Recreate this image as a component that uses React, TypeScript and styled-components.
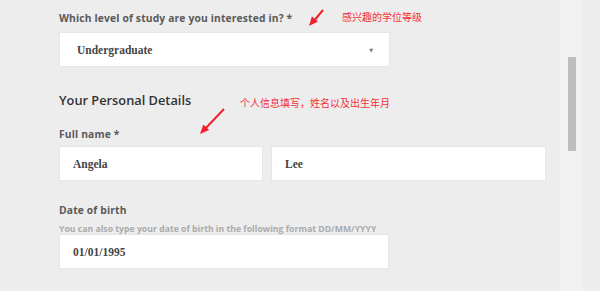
import React, { FC } from 'react';
import styled, { createGlobalStyle } from 'styled-components';

const GlobalStyle = createGlobalStyle`
  html, body {
    margin: 0;
    padding: 0;
    background-color: #EDEDED;
    height: 291px;
    overflow: hidden;
  }
`

const Page = styled.div`
  position: relative;
  display: flex;
  height: 291px;
  font-family: "Open Sans", "Liberation Sans", sans-serif;
`

const Main = styled.main`
  flex-grow: 1;
  display: flex;
  flex-direction: column;
  padding: 11px 0 0 59px;
`

const Label = styled.label<{ $gap?: number }>`
  display: block;
  margin-top: ${p => p.$gap ?? 0}px;
  font-size: 10.3px;
  line-height: 14px;
  font-weight: 700;
  color: #5A5A5A;
  letter-spacing: 0.15px;
`

const Hint = styled.div`
  margin-top: 7px;
  font-size: 8.7px;
  line-height: 10px;
  font-weight: 700;
  color: #ABABAB;
`

const Heading = styled.h2`
  margin: 24px 0 0;
  font-size: 12.8px;
  line-height: 18px;
  font-weight: 600;
  color: #333333;
`

const Row = styled.div`
  display: flex;
  gap: 8px;
  margin-top: 5px;
`

const Field = styled.div<{ $width: number; $gap?: number }>`
  box-sizing: border-box;
  display: flex;
  align-items: center;
  justify-content: space-between;
  width: ${p => p.$width}px;
  height: 35px;
  margin-top: ${p => p.$gap ?? 0}px;
  padding: 0 13px;
  background-color: #FFFFFF;
  border: 1px solid #E6E6E6;
  font-family: "Liberation Serif", "DejaVu Serif", serif;
  font-size: 11.5px;
  font-weight: 700;
  color: #444444;
`

const SelectField = styled(Field)`
  padding: 0 16px 0 17px;
`

const Caret = styled.span`
  font-family: "DejaVu Sans", sans-serif;
  font-size: 5px;
  color: #777777;
`

const ScrollTrack = styled.div`
  width: 23px;
  margin-right: 17px;
  background-color: #F1F1F1;
  display: flex;
  justify-content: center;
`

const ScrollThumb = styled.div`
  width: 8px;
  height: 94px;
  margin-top: 57px;
  background-color: #BDBDBD;
`

const Note = styled.div<{ $x: number; $y: number }>`
  position: absolute;
  left: ${p => p.$x}px;
  top: ${p => p.$y}px;
  font-family: "Noto Sans CJK SC", sans-serif;
  font-size: 10px;
  line-height: 12px;
  color: #F0303A;
  white-space: nowrap;
`

const ArrowSvg = styled.svg<{ $x: number; $y: number }>`
  position: absolute;
  left: ${p => p.$x}px;
  top: ${p => p.$y}px;
`

const Arrow: FC<{ x: number; y: number; w: number; h: number }> = ({ x, y, w, h }) => {
  // tail at top-right, head at bottom-left
  const angle = Math.atan2(h, -w);
  const hx = 1, hy = h - 1;
  const len = 10, spread = 0.4;
  const p1 = [hx - len * Math.cos(angle - spread), hy - len * Math.sin(angle - spread)];
  const p2 = [hx - len * Math.cos(angle + spread), hy - len * Math.sin(angle + spread)];
  return (
    <ArrowSvg $x={x} $y={y} width={w + 2} height={h + 2} viewBox={`0 0 ${w + 2} ${h + 2}`}>
      <line x1={w} y1={1} x2={hx + 4} y2={hy - 4} stroke="#F0202A" strokeWidth="2" />
      <polygon points={`${hx},${hy} ${p1[0]},${p1[1]} ${p2[0]},${p2[1]}`} fill="#F0202A" />
    </ArrowSvg>
  );
}

const App: FC = () => (
  <>
    <GlobalStyle />
    <Page>
      <Main>
        <Label>Which level of study are you interested in? *</Label>
        <SelectField $width={331} $gap={7}>
          <span>Undergraduate</span>
          <Caret>▼</Caret>
        </SelectField>

        <Heading>Your Personal Details</Heading>

        <Label $gap={18}>Full name *</Label>
        <Row>
          <Field $width={204}>Angela</Field>
          <Field $width={275}>Lee</Field>
        </Row>

        <Label $gap={22}>Date of birth</Label>
        <Hint>You can also type your date of birth in the following format DD/MM/YYYY</Hint>
        <Field $width={330}>01/01/1995</Field>
      </Main>
      <ScrollTrack>
        <ScrollThumb />
      </ScrollTrack>

      <Arrow x={308} y={9} w={15} h={18} />
      <Note $x={342} $y={11}>感兴趣的学位等级</Note>
      <Arrow x={199} y={108} w={25} h={27} />
      <Note $x={240} $y={97}>个人信息填写，姓名以及出生年月</Note>
    </Page>
  </>
);

export default App;
